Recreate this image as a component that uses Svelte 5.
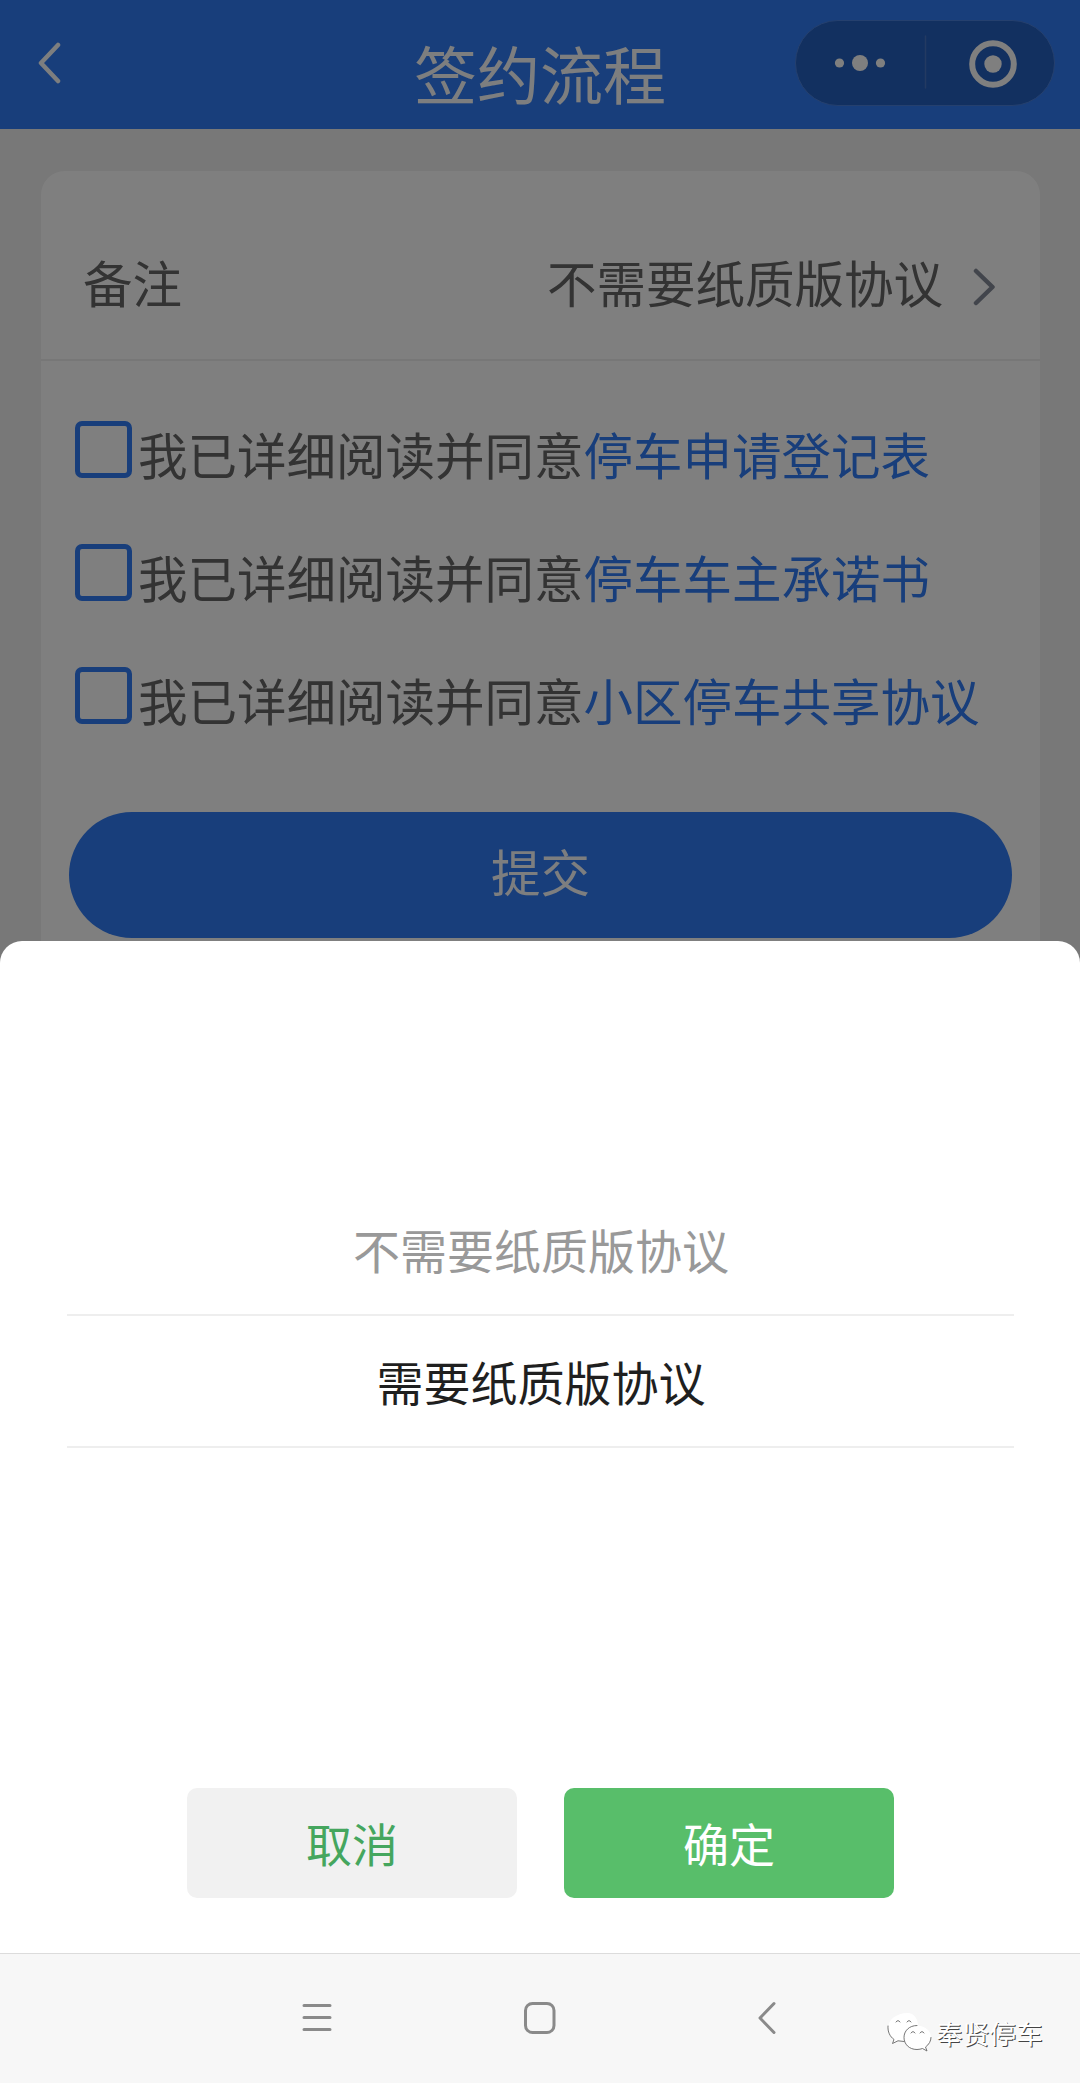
<script>
  const agreements = [
    { id: 1, title: '停车申请登记表' },
    { id: 2, title: '停车车主承诺书' },
    { id: 3, title: '小区停车共享协议' },
  ];

  const options = ['不需要纸质版协议', '需要纸质版协议'];

  let remark = options[0];
  let picked = options[1];
  let checked = [];

  function toggle(id) {
    checked = checked.includes(id) ? checked.filter((c) => c !== id) : [...checked, id];
  }

  function confirm() {
    remark = picked;
  }

  function cancel() {
    picked = remark;
  }
</script>

<div class="screen">
  <header class="navbar">
    <button class="back" aria-label="返回">
      <svg width="24" height="42" viewBox="0 0 24 42">
        <path d="M20 3 L3 21 L20 39" />
      </svg>
    </button>
    <h1>签约流程</h1>
    <div class="capsule">
      <svg width="260" height="86" viewBox="0 0 260 86">
        <circle cx="44.5" cy="43" r="4.6" />
        <circle cx="65" cy="43" r="8" />
        <circle cx="85.5" cy="43" r="4.6" />
        <path class="split" d="M130.5 16 V68" />
        <circle class="ring" cx="198" cy="44" r="20.8" />
        <circle cx="198" cy="44" r="8.7" />
      </svg>
    </div>
  </header>

  <main class="card">
    <div class="remark">
      <span>备注</span>
      <span class="value">{remark}</span>
      <svg width="24" height="38" viewBox="0 0 24 38">
        <path d="M3 3 L19.5 19 L3 35" />
      </svg>
    </div>

    <div class="agreements">
      {#each agreements as item}
        <div class="agreement">
          <button
            class="box"
            class:checked={checked.includes(item.id)}
            on:click={() => toggle(item.id)}
            aria-label="同意{item.title}"
          ></button>
          <p>我已详细阅读并同意<span class="link">{item.title}</span></p>
        </div>
      {/each}
    </div>

    <button class="submit">提交</button>
  </main>

  <div class="mask"></div>

  <!-- 底部选择器 -->
  <section class="sheet">
    <div class="picker">
      {#each options as option}
        <button class="option" class:active={option === picked} on:click={() => (picked = option)}>
          {option}
        </button>
      {/each}
    </div>

    <div class="actions">
      <button class="cancel" on:click={cancel}>取消</button>
      <button class="ok" on:click={confirm}>确定</button>
    </div>

    <footer class="system">
      <svg class="keys" width="480" height="40" viewBox="0 0 480 40">
        <path d="M4 7.5 H30 M4 19.5 H30 M4 31.5 H30" />
        <rect x="225.5" y="5.5" width="28.500" height="29" rx="7" />
        <path d="M474 5.5 L460 20 L474 34.5" />
      </svg>
      <div class="watermark">
        <svg width="46" height="42" viewBox="0 0 46 42">
          <path class="bubble" d="M22 2 C10 2 2 9 2 17.5 C2 22 4 25.5 8 28.5 L6.5 32.5 L12 29.5 C15 30.5 18 31 20 30.5 C26 30 33 24 32 13 C31 6 27 2 22 2 Z" />
          <path class="bubble" d="M31 14.5 C23 14.5 18 20 18 26.5 C18 33 23 38.5 31 38.5 C33 38.5 35 38 36.5 37.5 L41 40 L39.5 36 C43 33.5 45 30 45 26.5 C45 20 39 14.5 31 14.5 Z" />
          <path class="outline" d="M2 15 C1.5 21 4 25.5 8 28.5 L6.5 32.5 L12 29.8 L18 30.5 M31 14.5 C23 14.5 18 20 18 26.5 C18 33 23 38.5 31 38.5 C33 38.5 35 38 36.5 37.5 L41 40 L39.5 36 C43 33.5 45 30 45 26.5" />
          <path class="outline" d="M10 11 q2 -3 4 0 M21 11 q2 -3 4 0 M25 22 q2 -3 4 0 M34 22 q2 -3 4 0" />
        </svg>
        <span>奉贤停车</span>
      </div>
    </footer>
  </section>
</div>

<style>
  :global(body) {
    margin: 0;
    background-color: #f0f0f0;
    font-family: 'Noto Sans CJK SC', sans-serif;
  }

  button {
    border: none;
    padding: 0;
    margin: 0;
    background: none;
    font-family: inherit;
    cursor: pointer;
  }

  svg {
    display: block;
    flex-shrink: 0;
    fill: none;
    stroke-linecap: round;
    stroke-linejoin: round;
  }

  .screen {
    position: relative;
    width: 1080px;
    height: 2083px;
    overflow: hidden;
    background-color: #f0f0f0;
  }

  /* 顶部导航 */
  .navbar {
    display: grid;
    grid-template-columns: 376px 1fr 376px;
    height: 129px;
    background-color: #307cf6;
  }

  .back {
    justify-self: start;
    align-self: start;
    margin: 42px 0 0 38px;
  }

  .back svg {
    stroke: #fafcff;
    stroke-width: 4.5;
  }

  h1 {
    margin: 0;
    padding-top: 27px;
    font-size: 63px;
    font-weight: 400;
    line-height: 90px;
    text-align: center;
    color: #fafcff;
  }

  .capsule {
    justify-self: end;
    width: 258px;
    height: 84px;
    margin: 20px 25px 0 0;
    border: 1px solid #4a80dc;
    border-radius: 43px;
    background-color: #2460c0;
  }

  .capsule svg {
    margin: -1px;
    fill: #fff;
  }

  .capsule .split {
    stroke: #4674c4;
    stroke-width: 1.5;
  }

  .capsule .ring {
    fill: none;
    stroke: #fff;
    stroke-width: 6;
  }

  /* 表单 */
  .card {
    width: 999px;
    height: 900px;
    margin: 42px 0 0 41px;
    border-radius: 24px;
    background-color: #fff;
    font-size: 49.5px;
    color: #666;
  }

  .remark {
    display: flex;
    align-items: center;
    height: 188px;
    padding: 0 43px 0 42px;
    border-bottom: 2px solid #efefef;
    line-height: 72px;
  }

  .remark span {
    margin-top: 33px;
  }

  .remark .value {
    margin: 33px 30px 0 auto;
  }

  .remark svg {
    margin-top: 43px;
    stroke: #858b98;
    stroke-width: 4.5;
  }

  .agreements {
    padding: 60px 0 0 34px;
  }

  .agreement {
    display: flex;
    height: 123px;
  }

  .box {
    box-sizing: border-box;
    width: 57px;
    height: 57px;
    margin-right: 6px;
    border: 5px solid #307cf6;
    border-radius: 7px;
  }

  .box.checked {
    background-color: #307cf6;
  }

  .agreement p {
    margin: -3px 0 0;
    line-height: 72px;
    white-space: nowrap;
  }

  .link {
    color: #307cf6;
  }

  .submit {
    display: block;
    box-sizing: border-box;
    width: 943px;
    height: 126px;
    margin: 22px 0 0 28px;
    padding-bottom: 9px;
    border-radius: 63px;
    background-color: #307cf6;
    font-size: 49.5px;
    color: #fafcff;
  }

  .mask {
    position: absolute;
    inset: 0;
    background-color: rgba(0, 0, 0, 0.5);
  }

  /* 底部弹层 */
  .sheet {
    position: absolute;
    left: 0;
    right: 0;
    bottom: 0;
    display: flex;
    flex-direction: column;
    height: 1142px;
    border-radius: 22px 22px 0 0;
    background-color: #fff;
    overflow: hidden;
  }

  .picker {
    display: flex;
    flex-direction: column;
    height: 604px;
    padding: 243px 66px 0 67px;
  }

  .option {
    box-sizing: border-box;
    height: 130px;
    padding: 0 0 1px 1px;
    font-size: 47px;
    color: #999;
  }

  .option.active {
    height: 134px;
    border-top: 2px solid #eee;
    border-bottom: 2px solid #eee;
    color: #1f1f1f;
  }

  .actions {
    display: flex;
    justify-content: center;
    gap: 47px;
    height: 165px;
  }

  .actions button {
    box-sizing: border-box;
    width: 330px;
    height: 110px;
    padding: 0 0 2px 1px;
    border-radius: 10px;
    font-size: 46px;
  }

  .actions .cancel {
    background-color: #f1f1f1;
    color: #45a65e;
  }

  .actions .ok {
    background-color: #58be6a;
    color: #fff;
  }

  /* 系统按键栏 */
  .system {
    display: flex;
    flex: 1;
    border-top: 1px solid #dcdcdc;
    background-color: #f7f7f7;
  }

  .keys {
    margin: 44px 0 0 300px;
    stroke: #8a8a8a;
    stroke-width: 3;
  }

  .watermark {
    display: flex;
    align-items: center;
    height: 42px;
    margin: 57px 0 0 106px;
    font-size: 26.7px;
    color: #fff;
    text-shadow: 1px 1px 0 #444;
    white-space: nowrap;
  }

  .watermark span {
    margin-left: 4px;
  }

  .bubble {
    fill: #fff;
  }

  .outline {
    stroke: #666;
    stroke-width: 0.9;
  }
</style>
